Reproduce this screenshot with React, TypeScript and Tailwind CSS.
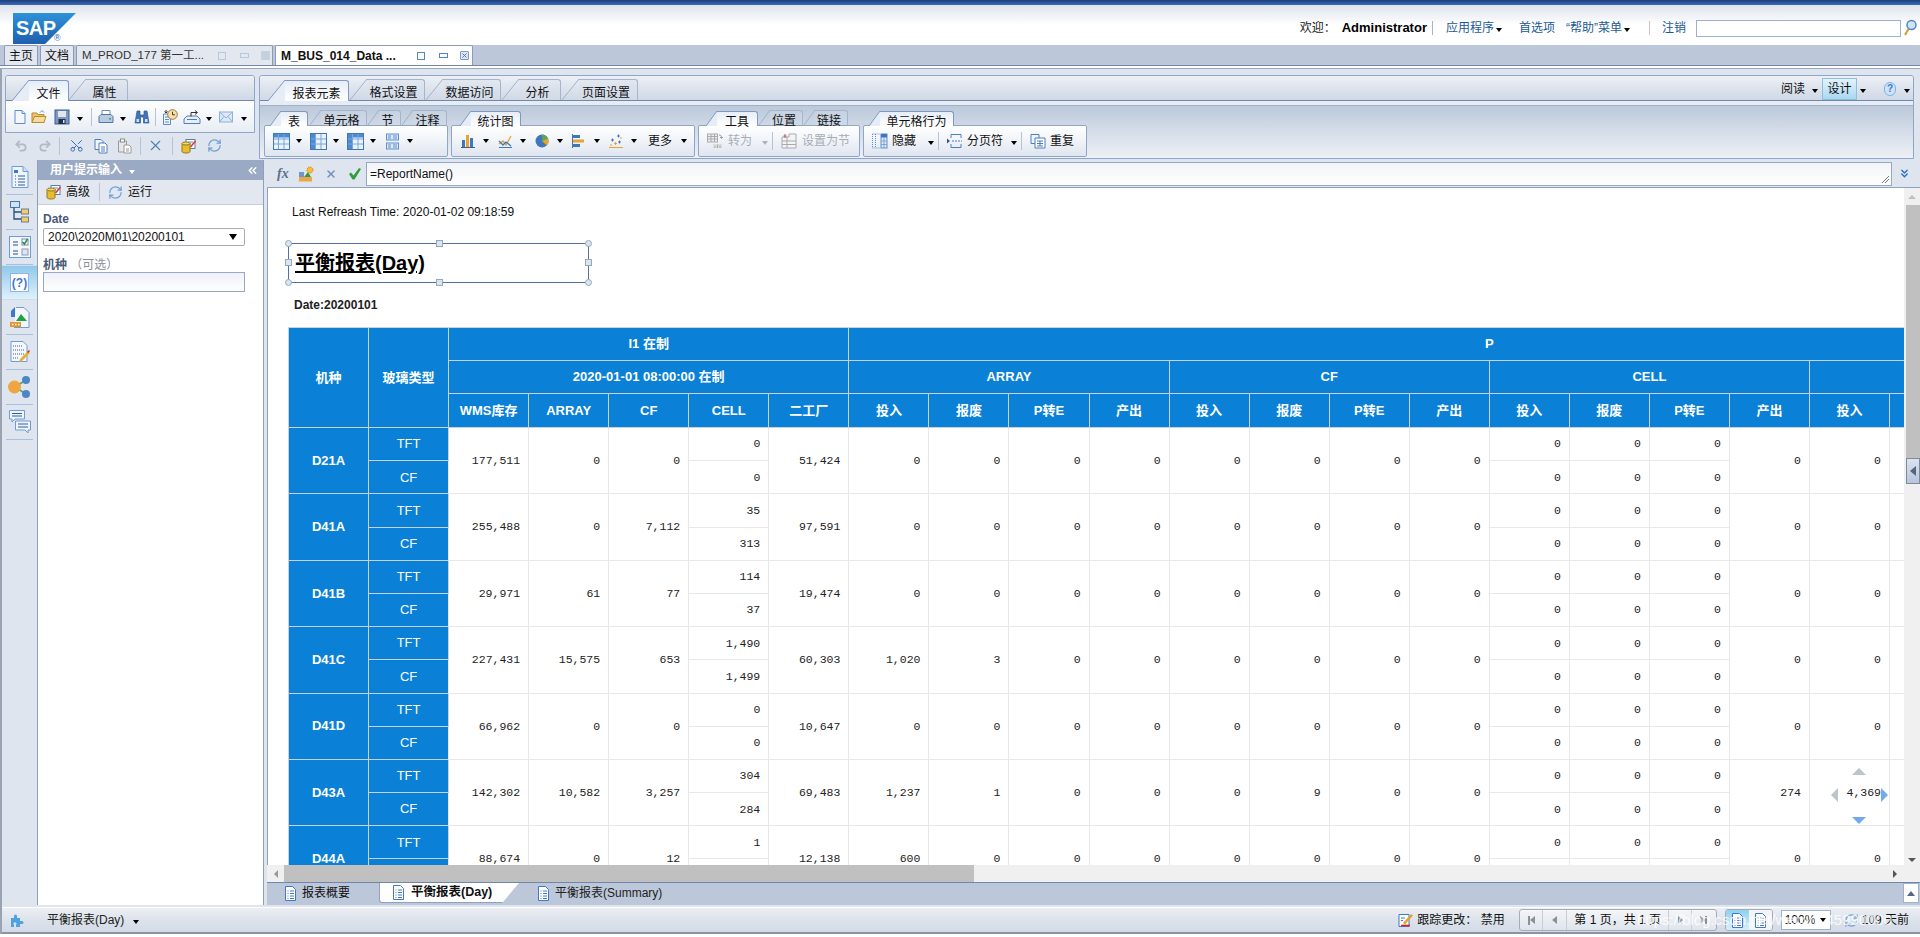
import type { ReactNode } from 'react';
import { ChevronsDown, ChevronsLeft, Redo2, RefreshCw, Scissors, Undo2, X } from 'lucide-react';

type IconProps = { children: ReactNode; w?: number; h?: number; box?: string };

function Svg({ children, w = 16, h = 16, box = '0 0 16 16' }: IconProps) {
  return (
    <svg width={w} height={h} viewBox={box} className="shrink-0">
      {children}
    </svg>
  );
}

function Caret({ color = 'black' }: { color?: 'black' | 'white' | 'gray' }) {
  const cls =
    color === 'white' ? 'border-t-white' : color === 'gray' ? 'border-t-[#aab2bd]' : 'border-t-black';
  return <span className={`inline-block w-0 h-0 shrink-0 border-x-[3.5px] border-x-transparent border-t-[4px] ${cls}`} />;
}

/* toolbar drawings */
const PageIcon = () => (
  <Svg>
    <path d="M3 1.500h7l3 3v10H3z" fill="#f4f8fe" stroke="#5a8ccf" />
    <path d="M10 1.500v3h3" fill="#dce8f7" stroke="#5a8ccf" />
  </Svg>
);
const FolderIcon = () => (
  <Svg>
    <path d="M1 4h5l1 1.500h6v8H1z" fill="#e9c36d" stroke="#b98a2e" />
    <path d="M3.500 7.500H15l-2 6H1z" fill="#f6dc9a" stroke="#b98a2e" />
    <path d="M9 3.500c1.500-2 3-2 4 0" fill="none" stroke="#5a8ccf" />
  </Svg>
);
const FloppyIcon = () => (
  <Svg>
    <rect x="1" y="1" width="14" height="14" fill="#7d97bd" stroke="#3f5f90" />
    <rect x="4" y="2" width="8" height="6" fill="#dfe6f0" />
    <rect x="4.500" y="10" width="7" height="5" fill="#1f2f4d" />
    <rect x="9" y="11" width="1.500" height="3" fill="#dfe6f0" />
  </Svg>
);
const PrinterIcon = () => (
  <Svg>
    <path d="M4 1.500h8v5H4z" fill="#fff" stroke="#6f8fb8" />
    <path d="M1 7.500l2-2h10l2 2v6H1z" fill="#b9cbe2" stroke="#56779f" />
    <rect x="11" y="9" width="2" height="1.500" fill="#27b04a" />
  </Svg>
);
const BinocularsIcon = () => (
  <Svg>
    <path d="M3 2h3v4h4V2h3l2 12H9.500V8h-3v6H1z" fill="#3f77bd" stroke="#2b5a97" strokeWidth=".7" />
    <rect x="2.500" y="10" width="2.500" height="3" fill="#cfe0f5" />
    <rect x="11" y="10" width="2.500" height="3" fill="#cfe0f5" />
  </Svg>
);
const ClockDocIcon = () => (
  <Svg>
    <path d="M1.500 5h7v10.500h-7z" fill="#eef4fc" stroke="#5a8ccf" />
    <path d="M3 8h4M3 10.500h4M3 13h4" stroke="#5a8ccf" />
    <circle cx="10.500" cy="5.500" r="4.800" fill="#f6dfae" stroke="#9a7a3a" />
    <path d="M10.500 2.800v3h2.500" fill="none" stroke="#4a3a1a" />
    <path d="M4 1v3M2.500 2.500L4 4l1.500-1.500" fill="none" stroke="#333" />
  </Svg>
);
const SendIcon = () => (
  <Svg w={18} box="0 0 18 16">
    <path d="M1 10l3-3h10l3 3v4.500H1z" fill="#e8eff9" stroke="#4f7fb8" />
    <path d="M4 10.500h10" stroke="#4f7fb8" />
    <path d="M8 7.500V3.500h6M12 1.500l2.500 2-2.500 2" fill="none" stroke="#333" />
  </Svg>
);
const MailIcon = () => (
  <Svg w={14} h={14} box="0 0 14 14">
    <rect x=".5" y="2" width="13" height="10" fill="#dce8f7" stroke="#8fb0da" />
    <path d="M.5 2L7 8l6.500-6M.5 12L5 6.500M13.500 12L9 6.500" fill="none" stroke="#8fb0da" />
  </Svg>
);
const CopyIcon = () => (
  <Svg>
    <path d="M2 1.500h6l2 2v8H2z" fill="#eef4fc" stroke="#4f7fb8" />
    <path d="M6 5h6l2 2v8H6z" fill="#fff" stroke="#4f7fb8" />
    <path d="M8 9h4M8 11h4M8 13h4" stroke="#4f7fb8" />
  </Svg>
);
const PasteIcon = () => (
  <Svg>
    <path d="M1.500 3h8v11h-8z" fill="#e7e7e7" stroke="#9a9a9a" />
    <rect x="3.500" y="1" width="4" height="3" fill="#fff" stroke="#8a8a8a" />
    <path d="M7 7h5l2 2v6H7z" fill="#fff" stroke="#9a9a9a" />
    <path d="M9 11h3M9 13h3" stroke="#9a9a9a" />
  </Svg>
);
const DbEditIcon = () => (
  <Svg>
    <rect x="5" y="1.500" width="9" height="9" fill="#fff" stroke="#5a7ea8" />
    <path d="M7 4h5M7 6h3" stroke="#5a8ccf" />
    <path d="M9.500 9l5-6" stroke="#d33" strokeWidth="1.500" />
    <path d="M1 5.500h8v8c0 2-8 2-8 0z" fill="#e6bd2f" stroke="#94761a" />
    <ellipse cx="5" cy="5.500" rx="4" ry="1.500" fill="#f4dc75" stroke="#94761a" />
  </Svg>
);
const RefreshIcon = () => <RefreshCw size={15} strokeWidth={2} className="shrink-0 text-[#6f9fd6]" />;

function TableIcon({ kind }: { kind: 'h' | 'v' | 'hv' }) {
  return (
    <Svg w={17} h={17} box="0 0 17 17">
      <rect x=".5" y=".5" width="16" height="16" fill="#eaf2fc" stroke="#3f77bd" />
      {kind !== 'v' && <rect x="1" y="1" width="15" height="3.500" fill="#4d8ad2" />}
      {kind !== 'h' && <rect x="1" y="1" width="4" height="15" fill="#4d8ad2" />}
      <path d="M5.500 1v15M11 1v15M1 6h15M1 11h15" stroke="#7ba6dc" />
    </Svg>
  );
}
const SectionIcon = () => (
  <Svg w={13} h={17} box="0 0 13 17">
    <rect x=".5" y="1" width="12" height="6" fill="#dbe8f8" stroke="#5f8fcb" />
    <rect x=".5" y="10" width="12" height="6" fill="#dbe8f8" stroke="#5f8fcb" />
    <path d="M2 3h3M7 3h4M2 5h3M7 5h4M2 12h3M7 12h4M2 14h3M7 14h4" stroke="#5f8fcb" />
  </Svg>
);
const BarsIcon = () => (
  <Svg w={14} h={14} box="0 0 14 14">
    <rect x="1" y="6" width="3" height="7" fill="#3f77bd" />
    <rect x="5" y="1" width="3" height="12" fill="#e5a52f" />
    <rect x="9" y="4" width="3" height="9" fill="#3f77bd" />
    <path d="M0 13.500h14" stroke="#3a5f90" />
  </Svg>
);
const LineChartIcon = () => (
  <Svg w={15} h={15} box="0 0 15 15">
    <path d="M1 13.500h13" stroke="#3f77bd" />
    <path d="M1 10l4-3 3 4 5-9" fill="none" stroke="#e5a52f" strokeWidth="1.300" />
    <path d="M1 7l4 4 3-3 5 4" fill="none" stroke="#3f77bd" strokeWidth="1.300" />
  </Svg>
);
const PieIcon = () => (
  <Svg w={14} h={14} box="0 0 14 14">
    <circle cx="7" cy="7" r="6.500" fill="#3f77bd" />
    <path d="M7 7V.5a6.500 6.500 0 0 1 6 4z" fill="#59a659" />
    <path d="M7 7l6-2.500a6.500 6.500 0 0 1-1 7z" fill="#e5a52f" />
  </Svg>
);
const HBarsIcon = () => (
  <Svg w={13} h={14} box="0 0 13 14">
    <path d="M.5 0v14" stroke="#3f77bd" />
    <rect x="1" y="1" width="7" height="3" fill="#3f77bd" />
    <rect x="1" y="5.500" width="11" height="3" fill="#e5a52f" />
    <rect x="1" y="10" width="7" height="3" fill="#3f77bd" />
  </Svg>
);
const ScatterIcon = () => (
  <Svg w={14} h={14} box="0 0 14 14">
    <path d="M0 13.500h14" stroke="#e5a52f" />
    <path d="M8 2h3M9.500.5v3M2 6h3M3.500 4.500v3M9 8h3M10.500 6.500v3" stroke="#3f77bd" />
    <path d="M5 9.500h3M6.500 8v3M1 11h2M11 4h2" stroke="#e5a52f" />
  </Svg>
);
const HideIcon = () => (
  <Svg>
    <path d="M.5 1v14M3.500 1v14M.5 1h8M.5 15h8" stroke="#5f8fcb" strokeDasharray="1 1" />
    <rect x="9" y="1" width="6" height="14" fill="#dbe8f8" stroke="#5f8fcb" />
    <rect x="9" y="1" width="6" height="3.500" fill="#3f77bd" />
    <path d="M9 8h6M9 11.500h6M12 4v11" stroke="#7ba6dc" />
  </Svg>
);
const PageBreakIcon = () => (
  <Svg>
    <path d="M4 5V1.500h10V5M4 11v3.500h10V11" fill="none" stroke="#4f7fb8" />
    <path d="M5 8h10" stroke="#4f7fb8" strokeDasharray="2 1" />
    <path d="M0 5.500L3 8l-3 2.500z" fill="#2b5a97" />
  </Svg>
);
const RepeatIcon = () => (
  <Svg>
    <path d="M1 1.500h8v9H1z" fill="#eef4fc" stroke="#4f7fb8" />
    <path d="M5 5h10v10H5z" fill="#fff" stroke="#4f7fb8" />
    <path d="M7 8h6M7 10.500h6M7 13h6M10 8v5" stroke="#4f7fb8" />
  </Svg>
);
const ConvertIcon = () => (
  <Svg>
    <rect x=".5" y="1" width="10" height="8" fill="#eee" stroke="#aaa" />
    <path d="M.5 3.500h10M.5 6h10M4 1v8M7.500 1v8" stroke="#aaa" />
    <path d="M12 2c2 0 2.500 1 2.500 3M13 4l1.500 1.500L16 4" fill="none" stroke="#999" />
    <rect x="6" y="11" width="9" height="4" fill="#ddd" />
    <path d="M8 15v-2M10.500 15v-3.500M13 15v-2.500" stroke="#aaa" />
  </Svg>
);
const SectionGrayIcon = () => (
  <Svg>
    <path d="M1 4h7V1l7 0v14H1z" fill="#f4f4f4" stroke="#aaa" />
    <path d="M1 8h14M1 11.500h14M6 4v11" stroke="#aaa" />
    <path d="M4 1v4M2.500 3h3" stroke="#a66" />
  </Svg>
);
const FxIcon = () => (
  <span className="w-[18px] text-[14px] leading-none italic font-bold text-[#5a6f92] [font-family:'Liberation_Serif',serif]">fx</span>
);
const FormulaInsertIcon = () => (
  <Svg>
    <rect x="1" y="6" width="5" height="5" fill="#6d98cf" />
    <rect x="1" y="11" width="13" height="4.500" fill="#eca64a" />
    <path d="M6 11l4-5 3 5z" fill="#2f9e3f" />
    <circle cx="12" cy="4" r="3" fill="#f7c12c" stroke="#d9632a" strokeDasharray="1 1" />
  </Svg>
);
const CheckIcon = () => (
  <Svg w={14} h={14} box="0 0 14 14">
    <path d="M1 7l2-1.500 2.500 3L11 1l2 1-6.500 10.500h-2z" fill="#2f9e3f" />
  </Svg>
);
const MiniDoc = () => (
  <Svg w={13} h={15} box="0 0 13 15">
    <path d="M1.500.5h7l3 3v11h-10z" fill="#fff" stroke="#3f77d0" />
    <path d="M3.500 5h1M6 5h4M3.500 7.500h1M6 7.500h4M3.500 10h1M6 10h4M3.500 12.500h1M6 12.500h4" stroke="#3f77d0" />
  </Svg>
);
const PuzzleIcon = () => (
  <Svg>
    <path d="M1 6h3V4a1.500 1.500 0 1 1 3 0v2h3v3h2a1.500 1.500 0 1 1 0 3h-2v3H6v-2a1.500 1.500 0 1 0-2 0v2H1z" fill="#4fa3dc" />
  </Svg>
);
const TrackIcon = () => (
  <Svg>
    <path d="M1 2.500h10v12H1z" fill="#fff" stroke="#3f77d0" />
    <path d="M3 6h4M3 8.500h2" stroke="#3f77d0" />
    <path d="M5 11l8-9 2 1.500-8 9z" fill="#e7a02f" />
    <path d="M3 13.500h9" stroke="#e02020" strokeWidth="1.600" />
  </Svg>
);

/* left rail drawings */
const RailReport = () => (
  <Svg w={18} h={22} box="0 0 18 22">
    <path d="M1 .5h11l5 5v16H1z" fill="#eef5fe" stroke="#6f9bd6" />
    <path d="M12 .5v5h5" fill="#cfe0f5" stroke="#6f9bd6" />
    <rect x="3" y="4" width="4" height="3" fill="#3f77d0" />
    <path d="M4 10h1M7 10h7M4 13h1M7 13h7M4 16h1M7 16h7M4 19h1M7 19h7" stroke="#2f5f9f" />
  </Svg>
);
const RailTree = () => (
  <Svg w={20} h={22} box="0 0 20 22">
    <rect x=".5" y=".5" width="9" height="6" fill="#cfe3f8" stroke="#4a78a8" />
    <path d="M4 6.500V18h7M4 11h7" fill="none" stroke="#1f4f7f" strokeWidth="1.300" />
    <rect x="11.500" y="8" width="7" height="5" fill="#f3cb6a" stroke="#6f7f90" />
    <rect x="11.500" y="16" width="7" height="5" fill="#f3cb6a" stroke="#6f7f90" />
  </Svg>
);
const RailCheck = () => (
  <Svg w={22} h={22} box="0 0 22 22">
    <rect x=".5" y=".5" width="21" height="21" fill="#f4f8fe" stroke="#6f9bd6" />
    <path d="M4 6h5M4 9h5M4 15h5M4 18h5" stroke="#2f4f7f" />
    <rect x="13" y="3" width="6" height="6" fill="#fff" stroke="#7a8aa0" />
    <path d="M13.500 6l2 2 3-5" fill="none" stroke="#1f8f4f" strokeWidth="1.500" />
    <rect x="13" y="13" width="6" height="6" fill="#dfe6ef" stroke="#8a9ab0" />
  </Svg>
);
const RailPrompt = () => (
  <div className="w-[19px] h-[19px] bg-white border border-[#8fb6e6] flex items-center justify-center text-[12px] leading-none font-bold text-[#3f77d0]">
    (?)
  </div>
);
const RailChart = () => (
  <Svg w={20} h={21} box="0 0 20 21">
    <path d="M6 .5h8l5 5v15H4" fill="#f4f8fe" stroke="#6f9bd6" />
    <path d="M1 4l4-4v10H1z" fill="#3f77d0" />
    <path d="M6 14l5-7 6 7z" fill="#1fa33f" />
    <rect x="0" y="15" width="11" height="5" fill="#e8942a" />
    <path d="M2 17.500h1.500M5 17.500h1.500M8 17.500h1.500" stroke="#fff" strokeWidth="1.500" />
  </Svg>
);
const RailEdit = () => (
  <Svg w={20} h={22} box="0 0 20 22">
    <path d="M1 .5h12l4 4v16H1z" fill="#f4f8fe" stroke="#6f9bd6" />
    <path d="M3 5h9M3 9h12M3 13h12M3 17h6" stroke="#355f99" strokeDasharray="1 1" />
    <path d="M10 18l8-8 2 2-8 8-3 1z" fill="#e7b02f" />
    <path d="M17 11l2-2 1 1-2 2z" fill="#d22" />
  </Svg>
);
const RailNodes = () => (
  <Svg w={23} h={22} box="0 0 23 22">
    <path d="M7 11l11-7M7 11l11 7" stroke="#5fa05f" strokeWidth="1.500" />
    <circle cx="6.500" cy="11" r="6.500" fill="#efa542" />
    <circle cx="18" cy="4" r="4" fill="#4d86c4" />
    <circle cx="18" cy="18" r="4" fill="#4d86c4" />
  </Svg>
);
const RailComments = () => (
  <Svg w={22} h={24} box="0 0 22 24">
    <path d="M.5.500h15V9H6l-3 3V9H.5z" fill="#eef5fe" stroke="#6f9bd6" />
    <path d="M3 3.500h10M3 6h10" stroke="#2f5f9f" />
    <path d="M6.500 11h15v9H19v3l-3-3H6.500z" fill="#eef5fe" stroke="#6f9bd6" />
    <path d="M9 14h10M9 17h10" stroke="#2f5f9f" />
  </Svg>
);

function Tab({ label, className, active, small }: { label: string; className: string; active?: boolean; small?: boolean }) {
  const slope = small ? 11 : 17;
  const h = small ? 15 : 21;
  return (
    <div className={`flex items-stretch shrink-0 ${className}`}>
      <svg width={slope} height={h} viewBox={`0 0 ${slope} ${h}`} className="shrink-0">
        <path d={`M0 ${h}L${slope} 0V${h}z`} fill={active ? '#e6edf7' : 'none'} />
        <path d={`M0 ${h}L${slope} 0`} stroke={active ? '#7e9ac2' : '#9fb2cc'} fill="none" />
      </svg>
      <div
        className={`flex-1 flex items-center justify-center pt-[6px] leading-[12px] whitespace-nowrap border-t border-r rounded-tr-[3px] ${
          active
            ? 'border-[#7e9ac2] bg-gradient-to-b from-[#e6edf7] to-white'
            : 'pr-1 border-[#a4b5cd] bg-gradient-to-b from-[#d5dde9]/30 to-[#d5dde9]/30'
        }`}
      >
        {label}
      </div>
    </div>
  );
}

function Group({ className, children }: { className: string; children: ReactNode }) {
  return (
    <div className={`h-[32px] flex items-center shrink-0 border border-[#8fa6c9] rounded-[2px] bg-gradient-to-b from-white via-[#f0f3f8] to-[#dfe6f0] ${className}`}>
      {children}
    </div>
  );
}

function DropIcon({ children, className }: { children: ReactNode; className: string }) {
  return (
    <div className={`flex items-center justify-between shrink-0 ${className}`}>
      {children}
      <Caret />
    </div>
  );
}

const Bar = () => <span className="block w-px h-[18px] bg-[#b5c3d6] shrink-0" />;

function Handle({ className, round }: { className: string; round?: boolean }) {
  return (
    <span
      className={`absolute w-[7px] h-[7px] bg-[#d9e6ef] border border-[#9aa8b5] ${round ? 'rounded-full' : ''} ${className}`}
    />
  );
}

type Row = {
  name: string;
  wms: string;
  array: string;
  cf: string;
  cell: [string, string];
  plant: string;
  arr: string[];
  cfs: string[];
  out: string;
  next: string;
};

const zero = ['0', '0', '0', '0'];
const rows: Row[] = [
  { name: 'D21A', wms: '177,511', array: '0', cf: '0', cell: ['0', '0'], plant: '51,424', arr: zero, cfs: zero, out: '0', next: '0' },
  { name: 'D41A', wms: '255,488', array: '0', cf: '7,112', cell: ['35', '313'], plant: '97,591', arr: zero, cfs: zero, out: '0', next: '0' },
  { name: 'D41B', wms: '29,971', array: '61', cf: '77', cell: ['114', '37'], plant: '19,474', arr: zero, cfs: zero, out: '0', next: '0' },
  { name: 'D41C', wms: '227,431', array: '15,575', cf: '653', cell: ['1,490', '1,499'], plant: '60,303', arr: ['1,020', '3', '0', '0'], cfs: zero, out: '0', next: '0' },
  { name: 'D41D', wms: '66,962', array: '0', cf: '0', cell: ['0', '0'], plant: '10,647', arr: zero, cfs: zero, out: '0', next: '0' },
  { name: 'D43A', wms: '142,302', array: '10,582', cf: '3,257', cell: ['304', '284'], plant: '69,483', arr: ['1,237', '1', '0', '0'], cfs: ['0', '9', '0', '0'], out: '274', next: '4,369' },
  { name: 'D44A', wms: '88,674', array: '0', cf: '12', cell: ['1', '0'], plant: '12,138', arr: ['600', '0', '0', '0'], cfs: zero, out: '0', next: '0' },
];

const sub = ['投入', '报废', 'P转E', '产出'];
const th = 'border border-[#c9d1d9] bg-[#0a80d6] text-white font-bold text-[13px] p-0 text-center';
const td = "border border-[#e8e8e8] pr-2 text-right text-[11.500px] text-[#222] align-middle [font-family:'Liberation_Mono',monospace]";

function ReportTable() {
  return (
    <table className="table-fixed border-collapse w-[1841px] ml-[20px]">
      <colgroup>
        {Array.from({ length: 23 }, (_, i) => (
          <col key={i} className="w-[80.050px]" />
        ))}
      </colgroup>
      <thead>
        <tr className="h-[33px]">
          <th rowSpan={3} className={th}>机种</th>
          <th rowSpan={3} className={th}>玻璃类型</th>
          <th colSpan={5} className={th}>I1 在制</th>
          <th colSpan={16} className={th}>P</th>
        </tr>
        <tr className="h-[33px]">
          <th colSpan={5} className={th}>2020-01-01 08:00:00 在制</th>
          <th colSpan={4} className={th}>ARRAY</th>
          <th colSpan={4} className={th}>CF</th>
          <th colSpan={4} className={th}>CELL</th>
          <th colSpan={4} className={th}></th>
        </tr>
        <tr className="h-[34px]">
          {['WMS库存', 'ARRAY', 'CF', 'CELL', '二工厂'].map((t) => (
            <th key={t} className={th}>{t}</th>
          ))}
          {[0, 1, 2, 3].flatMap((g) =>
            sub.map((t) => (
              <th key={`${g}${t}`} className={th}>{t}</th>
            )),
          )}
        </tr>
      </thead>
      <tbody>
        {rows.flatMap((r) => [
          <tr key={r.name} className="h-[33.200px]">
            <th rowSpan={2} className={th}>{r.name}</th>
            <th className={`${th} font-normal`}>TFT</th>
            <td rowSpan={2} className={td}>{r.wms}</td>
            <td rowSpan={2} className={td}>{r.array}</td>
            <td rowSpan={2} className={td}>{r.cf}</td>
            <td className={td}>{r.cell[0]}</td>
            <td rowSpan={2} className={td}>{r.plant}</td>
            {r.arr.map((v, i) => (
              <td key={`a${i}`} rowSpan={2} className={td}>{v}</td>
            ))}
            {r.cfs.map((v, i) => (
              <td key={`c${i}`} rowSpan={2} className={td}>{v}</td>
            ))}
            <td className={td}>0</td>
            <td className={td}>0</td>
            <td className={td}>0</td>
            <td rowSpan={2} className={td}>{r.out}</td>
            <td rowSpan={2} className={td}>{r.next}</td>
            <td rowSpan={2} className={td}></td>
            <td rowSpan={2} className={td}></td>
            <td rowSpan={2} className={td}></td>
          </tr>,
          <tr key={`${r.name}-cf`} className="h-[33.200px]">
            <th className={`${th} font-normal`}>CF</th>
            <td className={td}>{r.cell[1]}</td>
            <td className={td}>0</td>
            <td className={td}>0</td>
            <td className={td}>0</td>
          </tr>,
        ])}
      </tbody>
    </table>
  );
}

export default function App() {
  return (
    <div className="w-[1920px] h-[937px] flex flex-col overflow-hidden bg-white text-[12px] text-[#111] [font-family:'Liberation_Sans','Noto_Sans_CJK_SC',sans-serif]">
      <div className="h-[5px] shrink-0 bg-gradient-to-b from-[#1c3d7c] to-[#3a6cb8]" />

      {/* header */}
      <header className="h-[40px] shrink-0 flex items-start bg-gradient-to-b from-[#dfe3ec] via-white to-white">
        <div className="relative w-[63px] h-[31px] ml-[13px] mt-[8px] shrink-0">
          <div className="absolute inset-0 bg-gradient-to-b from-[#2e92d8] to-[#1f5fae] [clip-path:polygon(0_0,100%_0,51%_100%,0_100%)]" />
          <span className="absolute left-[3px] top-[5px] text-[20px] leading-[20px] font-bold text-white tracking-[-0.5px]">SAP</span>
          <span className="absolute left-[41px] top-[21px] text-[9px] leading-[9px] text-[#1f5fae]">®</span>
        </div>
        <div className="ml-auto h-[40px] pt-[6px] flex items-center text-[12px] text-[#1c5a94]">
          <span className="text-[#222]">欢迎：</span>
          <span className="ml-[6px] text-[13px] font-bold text-black">Administrator</span>
          <span className="ml-[5px] w-px h-[14px] bg-[#9ab5d5]" />
          <span className="ml-[13px]">应用程序</span>
          <span className="ml-[2px]"><Caret /></span>
          <span className="ml-[17px]">首选项</span>
          <span className="ml-[11px]">“帮助”菜单</span>
          <span className="ml-[2px]"><Caret /></span>
          <span className="ml-[19px] w-px h-[14px] bg-[#e4b9b9]" />
          <span className="ml-[12px]">注销</span>
          <div className="ml-[10px] w-[205px] h-[17px] border border-[#9cb0cf] bg-white" />
          <svg width="14" height="18" viewBox="0 0 14 18" className="ml-[2px] mr-[3px]">
            <circle cx="8.500" cy="6" r="4.500" fill="#cfe3f8" stroke="#4f87c8" strokeWidth="1.500" />
            <path d="M5.500 10L2 16" stroke="#d99a2b" strokeWidth="2" />
          </svg>
        </div>
      </header>

      {/* document tabs */}
      <div className="h-[21px] shrink-0 flex items-end pl-[4px] gap-[2px] bg-[#bcc7d9] border-b border-[#7286a8]">
        <div className="w-[34px] h-[20px] flex items-center justify-center bg-[#e3e8f0] border border-b-0 border-[#8b9cb8] rounded-t-[2px]">主页</div>
        <div className="w-[34px] h-[20px] flex items-center justify-center bg-[#e3e8f0] border border-b-0 border-[#8b9cb8] rounded-t-[2px]">文档</div>
        <div className="w-[197px] h-[20px] flex items-center pl-[5px] bg-[#e3e8f0] border border-b-0 border-[#8b9cb8] rounded-t-[2px] text-[#333]">
          <span className="w-[124px] text-[11.500px] whitespace-nowrap">M_PROD_177 第一工...</span>
          <span className="ml-[12px] w-[8px] h-[8px] border border-[#b8c7dc]" />
          <span className="ml-[14px] w-[9px] h-[5px] border border-[#b8c7dc]" />
          <span className="ml-[12px] w-[9px] h-[9px] bg-[#c5d0df] rounded-[1px]" />
        </div>
        <div className="w-[198px] h-[20px] flex items-center pl-[5px] bg-white border border-b-0 border-[#8b9cb8] rounded-t-[2px] font-bold">
          <span className="w-[124px] whitespace-nowrap">M_BUS_014_Data ...</span>
          <span className="ml-[12px] w-[8px] h-[8px] border border-[#4f87c8]" />
          <span className="ml-[14px] w-[9px] h-[5px] border border-[#4f87c8]" />
          <span className="ml-[12px] w-[9px] h-[9px] border border-[#7f9cc4] bg-[#dbe6f3] rounded-[1px] flex items-center justify-center">
            <X size={7} strokeWidth={3} className="text-[#4f6f9f]" />
          </span>
        </div>
      </div>
      <div className="h-[3px] shrink-0 bg-white border-b border-[#9aa8bd]" />

      {/* workspace */}
      <div className="flex-1 min-h-0 flex flex-col bg-[#dfe5ee] border-l-2 border-l-[#9aa3b2]">
        {/* ribbons */}
        <div className="h-[91px] shrink-0 flex pt-[6px]">
          {/* left ribbon */}
          <div className="w-[250px] ml-[3px] shrink-0">
            <div className="h-[58px] flex flex-col border border-[#8fa6c9] rounded-t-[3px] overflow-hidden">
              <div className="h-[25px] shrink-0 flex items-end pl-[6px] bg-gradient-to-b from-[#edf0f5] to-[#cfd8e6] border-b border-[#7088ad]">
                <Tab label="文件" active className="w-[57px] h-[21px] -mb-px" />
                <Tab label="属性" className="w-[59px] h-[21px]" />
              </div>
              <div className="flex-1 flex items-center bg-gradient-to-b from-white to-[#e8edf4]">
                <span className="ml-[6px]"><PageIcon /></span>
                <span className="ml-[3px]"><FolderIcon /></span>
                <span className="ml-[7px]"><FloppyIcon /></span>
                <span className="ml-[7px]"><Caret /></span>
                <span className="ml-[8px] w-px h-[18px] bg-[#b5c3d6]" />
                <span className="ml-[6px]"><PrinterIcon /></span>
                <span className="ml-[6px]"><Caret /></span>
                <span className="ml-[8px]"><BinocularsIcon /></span>
                <span className="ml-[5px] w-px h-[18px] bg-[#b5c3d6]" />
                <span className="ml-[6px]"><ClockDocIcon /></span>
                <span className="ml-[5px]"><SendIcon /></span>
                <span className="ml-[5px]"><Caret /></span>
                <span className="ml-[7px]"><MailIcon /></span>
                <span className="ml-[8px]"><Caret /></span>
              </div>
            </div>
            <div className="h-[25px] flex items-center">
              <Undo2 size={14} strokeWidth={3} className="ml-[9px] shrink-0 text-[#b4b9c1]" />
              <Redo2 size={14} strokeWidth={3} className="ml-[10px] shrink-0 text-[#b4b9c1]" />
              <span className="ml-[7px]"><Bar /></span>
              <Scissors size={15} strokeWidth={1.6} className="ml-[9px] shrink-0 text-[#3f6fb0] -rotate-90" />
              <span className="ml-[9px]"><CopyIcon /></span>
              <span className="ml-[8px]"><PasteIcon /></span>
              <span className="ml-[7px]"><Bar /></span>
              <X size={17} strokeWidth={1.6} className="ml-[6px] shrink-0 text-[#4f7fb8]" />
              <span className="ml-[8px]"><Bar /></span>
              <span className="ml-[8px]"><DbEditIcon /></span>
              <span className="ml-[10px]"><RefreshIcon /></span>
            </div>
          </div>

          {/* right ribbon */}
          <div className="w-[1655px] ml-[4px] shrink-0 h-[84px] flex flex-col border border-[#8fa6c9] rounded-t-[3px] overflow-hidden">
            <div className="h-[25px] shrink-0 flex items-end pl-[8px] pr-[3px] bg-gradient-to-b from-[#edf0f5] to-[#cfd8e6] border-b border-[#7088ad]">
              <Tab label="报表元素" active className="w-[81px] h-[21px] -mb-px" />
              <Tab label="格式设置" className="w-[75px] h-[21px] ml-[1px]" />
              <Tab label="数据访问" className="w-[75px] h-[21px] ml-[1px]" />
              <Tab label="分析" className="w-[59px] h-[21px] ml-[1px]" />
              <Tab label="页面设置" className="w-[76px] h-[21px] ml-[1px]" />
              <div className="ml-auto flex items-center h-[23px]">
                <span>阅读</span>
                <span className="ml-[7px]"><Caret /></span>
                <span className="ml-[4px] w-[35px] h-[22px] flex items-center justify-center border border-[#8cc0e0] bg-gradient-to-b from-[#e4f3fb] to-[#a9d8f0]">设计</span>
                <span className="ml-[3px]"><Caret /></span>
                <span className="ml-[18px] w-[12px] h-[14px] rounded-full bg-[#cfe3f8] border border-[#7fb0e0] text-[#3f77d0] text-[10px] leading-[12px] text-center font-bold">?</span>
                <span className="ml-[8px]"><Caret /></span>
              </div>
            </div>
            <div className="h-[5px] shrink-0 bg-[#e7ebf2] border-b border-[#9fb2cc]" />
            <div className="flex-1 flex flex-col pl-[2px] bg-gradient-to-b from-[#bcc9da] via-[#d5dde9] to-[#edf0f5]">
              <div className="relative z-10 h-[19px] shrink-0 flex items-end text-[12px]">
                <Tab small label="表" active className="w-[38px] h-[15px] ml-[8px] -mb-px" />
                <Tab small label="单元格" className="w-[57px] h-[15px] ml-[2px]" />
                <Tab small label="节" className="w-[33px] h-[15px] ml-[1px]" />
                <Tab small label="注释" className="w-[45px] h-[15px] ml-[1px]" />
                <Tab small label="统计图" active className="w-[61px] h-[15px] ml-[13px] -mb-px" />
                <Tab small label="工具" active className="w-[52px] h-[15px] ml-[185px] -mb-px" />
                <Tab small label="位置" className="w-[44px] h-[15px] ml-[1px]" />
                <Tab small label="链接" className="w-[44px] h-[15px] ml-[1px]" />
                <Tab small label="单元格行为" active className="w-[85px] h-[15px] ml-[21px] -mb-px" />
              </div>
              <div className="flex gap-[3px] ml-[2px]">
                <Group className="w-[184px] pl-[8px]">
                  <DropIcon className="w-[29px] mr-[8px]"><TableIcon kind="h" /></DropIcon>
                  <DropIcon className="w-[29px] mr-[8px]"><TableIcon kind="v" /></DropIcon>
                  <DropIcon className="w-[29px] mr-[8px]"><TableIcon kind="hv" /></DropIcon>
                  <DropIcon className="w-[27px] ml-[2px]"><SectionIcon /></DropIcon>
                </Group>
                <Group className="w-[244px] pl-[9px]">
                  <DropIcon className="w-[28px] mr-[9px]"><BarsIcon /></DropIcon>
                  <DropIcon className="w-[28px] mr-[9px]"><LineChartIcon /></DropIcon>
                  <DropIcon className="w-[28px] mr-[9px]"><PieIcon /></DropIcon>
                  <DropIcon className="w-[28px] mr-[9px]"><HBarsIcon /></DropIcon>
                  <DropIcon className="w-[28px] mr-[11px]"><ScatterIcon /></DropIcon>
                  <DropIcon className="w-[39px]"><span>更多</span></DropIcon>
                </Group>
                <Group className="w-[162px] pl-[8px] text-[#a7adb6]">
                  <ConvertIcon />
                  <span className="ml-[5px]">转为</span>
                  <span className="ml-[10px]"><Caret color="gray" /></span>
                  <span className="ml-[4px]"><Bar /></span>
                  <span className="ml-[8px]"><SectionGrayIcon /></span>
                  <span className="ml-[5px]">设置为节</span>
                </Group>
                <Group className="w-[224px] pl-[8px]">
                  <HideIcon />
                  <span className="ml-[4px]">隐藏</span>
                  <span className="ml-[12px]"><Caret /></span>
                  <span className="ml-[4px]"><Bar /></span>
                  <span className="ml-[8px]"><PageBreakIcon /></span>
                  <span className="ml-[4px]">分页符</span>
                  <span className="ml-[8px]"><Caret /></span>
                  <span className="ml-[4px]"><Bar /></span>
                  <span className="ml-[8px]"><RepeatIcon /></span>
                  <span className="ml-[4px]">重复</span>
                </Group>
              </div>
            </div>
          </div>
        </div>

        {/* body */}
        <div className="flex-1 min-h-0 flex">
          <aside className="w-[35px] shrink-0 flex flex-col">
            {[RailReport, RailTree, RailCheck, RailPrompt, RailChart, RailEdit, RailNodes, RailComments].map((Icon, i) => (
              <div
                key={i}
                className={
                  i === 3
                    ? 'h-[35px] flex items-center justify-center border-y border-[#c9dff2] bg-gradient-to-b from-[#8fc8ea] to-[#dff1fb]'
                    : 'h-[35px] mx-[4px] flex items-center justify-center border-b border-[#a9c0dc]'
                }
              >
                <Icon />
              </div>
            ))}
          </aside>

          <section className="w-[227px] shrink-0 flex flex-col bg-white border-x border-[#8fa0ba]">
            <div className="h-[20px] shrink-0 flex items-center pl-[12px] pr-[4px] bg-[#9aaac4] text-white font-bold">
              <span>用户提示输入</span>
              <span className="ml-[7px]"><Caret color="white" /></span>
              <ChevronsLeft size={13} strokeWidth={2.5} className="ml-auto text-white" />
            </div>
            <div className="h-[25px] shrink-0 flex items-center pl-[8px] bg-[#e3e8f0] border-b border-[#c5cfdd]">
              <DbEditIcon />
              <span className="ml-[4px]">高级</span>
              <span className="ml-[9px]"><Bar /></span>
              <span className="ml-[8px]"><RefreshIcon /></span>
              <span className="ml-[5px]">运行</span>
            </div>
            <div className="flex-1 px-[5px]">
              <div className="mt-[7px] h-[14px] leading-[14px] font-bold text-[#4a5a78]">Date</div>
              <div className="mt-[2px] w-[202px] h-[18px] flex items-center justify-between pl-[4px] pr-[7px] border border-[#a9adb3] rounded-[2px] text-[#111]">
                <span>2020\2020M01\20200101</span>
                <span className="inline-block w-0 h-0 border-x-[4px] border-x-transparent border-t-[6px] border-t-black" />
              </div>
              <div className="mt-[12px] h-[14px] leading-[14px] font-bold text-[#4a5a78]">
                机种 <span className="font-normal text-[#8a8f98]">（可选）</span>
              </div>
              <div className="w-[202px] h-[20px] border border-[#98a8c2] bg-gradient-to-b from-[#eef1f6] to-white" />
            </div>
          </section>

          <div className="w-[1656px] ml-[1px] flex flex-col min-w-0">
            {/* formula bar */}
            <div className="h-[27px] shrink-0 flex items-center pl-[12px]">
              <FxIcon />
              <span className="ml-[3px]"><FormulaInsertIcon /></span>
              <X size={12} strokeWidth={3} className="ml-[11px] shrink-0 text-[#6f90bd]" />
              <span className="ml-[11px]"><CheckIcon /></span>
              <div className="relative ml-[4px] w-[1526px] h-[24px] flex items-center pl-[3px] bg-gradient-to-b from-[#f1f4f8] to-white border border-[#98a8c2]">
                =ReportName()
                <svg width="9" height="9" viewBox="0 0 9 9" className="absolute right-[1px] bottom-[1px]">
                  <path d="M1 8l7-7M4 8l4-4" stroke="#777" />
                </svg>
              </div>
              <ChevronsDown size={13} strokeWidth={2.5} className="ml-[6px] shrink-0 text-[#2b6fc0]" />
            </div>

            {/* report */}
            <div className="relative flex-1 min-h-0 flex border-t border-l border-[#8fa3c1] bg-white ml-[2px]">
              <div className="w-[1636px] shrink-0 overflow-hidden">
                <p className="mt-[17px] ml-[24px] h-[14px] leading-[14px]">Last Refreash Time: 2020-01-02 09:18:59</p>
                <div className="relative mt-[24px] ml-[20px] w-[301px] h-[40px] flex items-center pl-[6px] border border-[#5570a8] text-[20px] font-bold underline text-black">
                  平衡报表(Day)
                  <Handle round className="-left-[4px] -top-[4px]" />
                  <Handle className="left-[147px] -top-[4px]" />
                  <Handle round className="-right-[4px] -top-[4px]" />
                  <Handle className="-left-[4px] top-[15px]" />
                  <Handle className="-right-[4px] top-[15px]" />
                  <Handle round className="-left-[4px] -bottom-[4px]" />
                  <Handle className="left-[147px] -bottom-[4px]" />
                  <Handle round className="-right-[4px] -bottom-[4px]" />
                </div>
                <p className="mt-[15px] ml-[26px] h-[14px] leading-[14px] font-bold text-[#222]">Date:20200101</p>
                <div className="mt-[15px]">
                  <ReportTable />
                </div>
              </div>

              {/* vertical scrollbar */}
              <div className="flex-1 flex flex-col items-end bg-[#f0f0f0]">
                <div className="w-full h-[17px] shrink-0 flex items-center justify-center">
                  <span className="w-0 h-0 border-x-[4px] border-x-transparent border-b-[4px] border-b-[#c0c0c0]" />
                </div>
                <div className="w-[14px] h-[253px] shrink-0 bg-[#c0c0c0]" />
                <div className="w-[14px] h-[26px] shrink-0 flex items-center justify-center border border-[#7f8a9c] bg-gradient-to-b from-[#dbe3ef] to-[#b8c6db]">
                  <span className="w-0 h-0 border-y-[5px] border-y-transparent border-r-[6px] border-r-[#556680]" />
                </div>
                <div className="mt-auto mb-[3px] self-center w-0 h-0 border-x-[4px] border-x-transparent border-t-[4px] border-t-[#555]" />
              </div>

              {/* drill arrows over the D43A cell */}
              <span className="absolute left-[1584px] top-[580px] w-0 h-0 border-x-[7px] border-x-transparent border-b-[7px] border-b-[#bcc4cc]" />
              <span className="absolute left-[1584px] top-[629px] w-0 h-0 border-x-[7px] border-x-transparent border-t-[7px] border-t-[#72aaee]" />
              <span className="absolute left-[1563px] top-[600px] w-0 h-0 border-y-[7px] border-y-transparent border-r-[7px] border-r-[#bcc4cc]" />
              <span className="absolute left-[1613px] top-[600px] w-0 h-0 border-y-[7px] border-y-transparent border-l-[7px] border-l-[#72aaee]" />
            </div>

            {/* horizontal scrollbar */}
            <div className="h-[17px] shrink-0 flex items-center bg-[#f0f0f0] ml-[2px]">
              <span className="w-[17px] flex justify-center">
                <span className="w-0 h-0 border-y-[4px] border-y-transparent border-r-[4px] border-r-[#999]" />
              </span>
              <div className="w-[690px] h-full bg-[#c0c0c0]" />
              <span className="ml-auto mr-[21px] w-0 h-0 border-y-[4px] border-y-transparent border-l-[4px] border-l-[#555]" />
              <span className="w-[2px]" />
            </div>

            {/* report tabs */}
            <div className="h-[23px] shrink-0 flex items-start bg-[#bcc7d9] border-t border-[#6f86ad] ml-[2px]">
              <div className="flex items-center h-[20px] ml-[17px]">
                <MiniDoc />
                <span className="ml-[5px]">报表概要</span>
              </div>
              <div className="relative ml-[29px] w-[140px] h-[20px] flex items-center pl-[12px] bg-white border-b border-l border-[#8fa3c1] rounded-bl-[3px] [clip-path:polygon(0_0,100%_0,88%_100%,0_100%)]">
                <MiniDoc />
                <span className="ml-[6px] text-[12.500px] font-bold">平衡报表(Day)</span>
              </div>
              <div className="flex items-center h-[20px] ml-[18px]">
                <MiniDoc />
                <span className="ml-[5px] text-[#222]">平衡报表(Summary)</span>
              </div>
              <div className="ml-auto mr-[1px] w-[16px] h-[20px] flex items-center justify-center bg-white border border-[#9fb2cc]">
                <span className="w-0 h-0 border-x-[4px] border-x-transparent border-b-[5px] border-b-[#556680]" />
              </div>
            </div>
          </div>
        </div>

        {/* status bar */}
        <footer className="relative h-[27px] shrink-0 mt-[2px] flex items-center bg-gradient-to-b from-[#eceef3] via-[#dde3ec] to-[#d3dae6] border-t border-white border-b-2 border-b-[#8a94a5]">
          <span className="ml-[8px]"><PuzzleIcon /></span>
          <span className="ml-[21px] text-[#222]">平衡报表(Day)</span>
          <span className="ml-[9px]"><Caret /></span>

          <span className="ml-auto"><TrackIcon /></span>
          <span className="ml-[3px]">跟踪更改： 禁用</span>
          <div className="ml-[14px] w-[198px] h-[22px] flex items-center border border-[#a7adb6] rounded-[3px] text-[#111] bg-gradient-to-b from-[#f4f5f8] to-[#dfe4ec]">
            <span className="w-[24px] h-full flex items-center justify-center border-r border-[#c9ced6]">
              <span className="w-[2px] h-[9px] bg-[#8a9098]" />
              <span className="w-0 h-0 border-y-[4px] border-y-transparent border-r-[5px] border-r-[#8a9098]" />
            </span>
            <span className="w-[24px] h-full flex items-center justify-center border-r border-[#c9ced6]">
              <span className="w-0 h-0 border-y-[4px] border-y-transparent border-r-[5px] border-r-[#8a9098]" />
            </span>
            <span className="w-[102px] text-center">第 1 页，共 1 页</span>
            <span className="w-[24px] h-full flex items-center justify-center border-x border-[#c9ced6]">
              <span className="w-0 h-0 border-y-[4px] border-y-transparent border-l-[5px] border-l-[#8a9098]" />
            </span>
            <span className="w-[24px] h-full flex items-center justify-center">
              <span className="w-0 h-0 border-y-[4px] border-y-transparent border-l-[5px] border-l-[#8a9098]" />
              <span className="w-[2px] h-[9px] bg-[#8a9098]" />
            </span>
          </div>
          <div className="ml-[8px] w-[48px] h-[22px] flex border border-[#a7adb6] rounded-[3px] overflow-hidden">
            <span className="w-[23px] flex items-center justify-center bg-gradient-to-b from-[#8fd0ec] to-[#d7f0fa]"><MiniDoc /></span>
            <span className="flex-1 flex items-center justify-center bg-[#f2f4f8]"><MiniDoc /></span>
          </div>
          <div className="ml-[8px] w-[50px] h-[20px] flex items-center justify-between pl-[3px] pr-[4px] bg-white border border-[#9fb2cc]">
            <span>100%</span>
            <Caret />
          </div>
          <span className="ml-[13px]"><RefreshIcon /></span>
          <span className="ml-[3px] mr-[11px]">109 天前</span>

          <span className="absolute left-[1635px] top-[3px] text-[15px] leading-[18px] whitespace-nowrap text-white/80">https://blog.csdn.net/weixin_45990000</span>
        </footer>
      </div>
      <div className="h-[3px] shrink-0 bg-white" />
    </div>
  );
}
